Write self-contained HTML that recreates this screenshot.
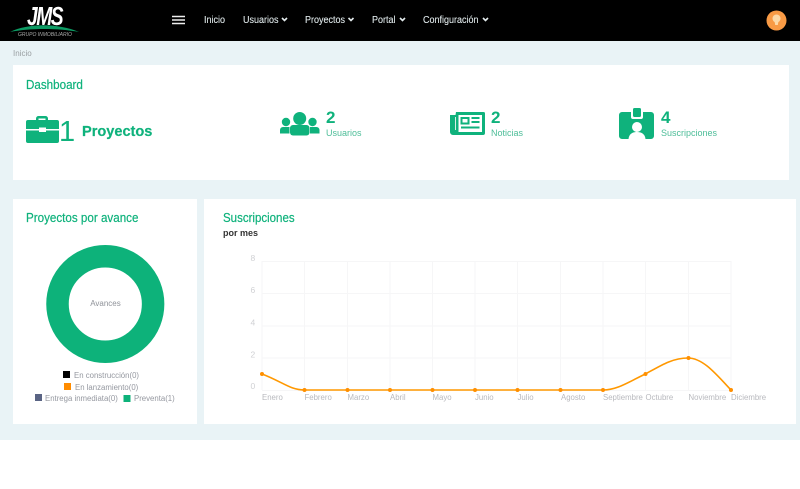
<!DOCTYPE html>
<html lang="es">
<head>
<meta charset="utf-8">
<title>Dashboard</title>
<style>
html,body{margin:0;padding:0;background:#fff}
body{width:800px;height:489px;overflow:hidden;position:relative;font-family:"Liberation Sans",sans-serif}
.a{position:absolute;white-space:nowrap;transform-origin:0 0}
.bg{left:0;top:41px;width:800px;height:399px;background:#e9f3f6}
.hd{left:0;top:0;width:800px;height:41px;background:#000}
.card{position:absolute;background:#fff}
.nav{top:15px;font-size:10px;line-height:12px;color:#dfe8ea;transform:scaleX(.9);-webkit-text-stroke:.1px #dfe8ea}
.g{color:#0fb27c;-webkit-text-stroke:.2px #0fb27c}
.sm{font-size:9px;line-height:12px;color:#4dbd98}
.num{font-size:17px;line-height:18px;font-weight:bold;color:#0fb27c}
svg{position:absolute;left:0;top:0}
</style>
</head>
<body>
<div class="a bg"></div>
<div class="a hd"></div>
<div class="card" style="left:13px;top:65px;width:776px;height:115px"></div>
<div class="card" style="left:13px;top:199px;width:184px;height:225px"></div>
<div class="card" style="left:204px;top:199px;width:592px;height:225px"></div>

<div class="a" style="left:27px;top:3px;font-size:26px;line-height:27px;font-weight:bold;font-style:italic;color:#fff;letter-spacing:-2px;transform:scaleX(.74)">JMS</div>
<div class="a" style="left:18px;top:32px;font-size:5px;line-height:7px;font-style:italic;color:#aaa">GRUPO INMOBILIARIO</div>

<div class="a nav" style="left:204px">Inicio</div>
<div class="a nav" style="left:243px">Usuarios</div>
<div class="a nav" style="left:305px">Proyectos</div>
<div class="a nav" style="left:372px">Portal</div>
<div class="a nav" style="left:423px">Configuración</div>

<div class="a" style="left:13px;top:48px;font-size:8px;line-height:11px;color:#9a9fa2">Inicio</div>

<div class="a g" style="left:26px;top:78px;font-size:12.5px;line-height:15px;transform:scaleX(.93)">Dashboard</div>
<div class="a" style="left:59px;top:116px;font-size:29px;line-height:33px;color:#0fb27c">1</div>
<div class="a g" style="left:82px;top:123px;font-size:15px;line-height:18px;font-weight:bold;transform:scaleX(.97)">Proyectos</div>

<div class="a num" style="left:326px;top:109px">2</div>
<div class="a sm" style="left:326px;top:127px">Usuarios</div>
<div class="a num" style="left:491px;top:109px">2</div>
<div class="a sm" style="left:491px;top:127px">Noticias</div>
<div class="a num" style="left:661px;top:109px">4</div>
<div class="a sm" style="left:661px;top:127px">Suscripciones</div>

<div class="a g" style="left:26px;top:211px;font-size:12.5px;line-height:15px;transform:scaleX(.93)">Proyectos por avance</div>
<div class="a g" style="left:223px;top:211px;font-size:12.5px;line-height:15px;transform:scaleX(.92)">Suscripciones</div>
<div class="a" style="left:223px;top:227px;font-size:9px;line-height:12px;font-weight:bold;color:#333">por mes</div>

<svg width="800" height="489" viewBox="0 0 800 489" xmlns="http://www.w3.org/2000/svg">
  <!-- logo arc -->
  <path d="M10 32C28 23 58 23 79 32C58 28 30 28 10 32Z" fill="#0c9a63"/>
  <!-- hamburger -->
  <path d="M172 16.500h13M172 20h13M172 23.500h13" stroke="#eee" stroke-width="1.600" fill="none"/>
  <!-- nav chevrons -->
  <g stroke="#e4ecee" stroke-width="1.600" fill="none">
    <path d="M282 18l2.500 2.500L287 18"/>
    <path d="M348.500 18l2.500 2.500L353.500 18"/>
    <path d="M400 18l2.500 2.500L405 18"/>
    <path d="M483 18l2.500 2.500L488 18"/>
  </g>
  <!-- avatar -->
  <circle cx="776.500" cy="20.500" r="10" fill="#f89a45"/>
  <circle cx="776.500" cy="18.500" r="4" fill="#fcd9a8"/>
  <path d="M774.500 21h4l-.7 4h-2.600z" fill="#fcd9a8"/>

  <!-- briefcase -->
  <g fill="#0fb27c">
    <path d="M36 120v-1.500a2.500 2.500 0 0 1 2.500-2.500h7a2.500 2.500 0 0 1 2.500 2.500v1.500h-2.500v-1.500h-7v1.500z"/>
    <path d="M28 120h29a2 2 0 0 1 2 2v7H46v-1.500h-7V129H26v-7a2 2 0 0 1 2-2z"/>
    <path d="M26 130.500h13v1.500h7v-1.500h13v10.500a2 2 0 0 1-2 2H28a2 2 0 0 1-2-2z"/>
  </g>
  <!-- users -->
  <g fill="#0fb27c">
    <circle cx="299.700" cy="118.500" r="6.500"/>
    <circle cx="286" cy="122" r="4.200"/>
    <circle cx="312.500" cy="122" r="4.200"/>
    <rect x="290" y="125" width="19.500" height="10.500" rx="3"/>
    <path d="M280 133.500v-3.500a3 3 0 0 1 3-3h6.500v6.500z"/>
    <path d="M319.500 133.500v-3.500a3 3 0 0 0-3-3H310v6.500z"/>
  </g>
  <!-- newspaper -->
  <g>
    <path d="M456 112h27.500a1.500 1.500 0 0 1 1.500 1.500V133a2 2 0 0 1-2 2h-30a3 3 0 0 1-3-3v-17h5.500z" fill="#0fb27c"/>
    <path d="M455.500 117v13" stroke="#d5f0e5" stroke-width="1"/>
    <rect x="458.500" y="115" width="23.500" height="17" fill="#fff"/>
    <rect x="461.500" y="118" width="7" height="5.500" fill="none" stroke="#0fb27c" stroke-width="2"/>
    <path d="M471.500 118h8M471.500 122h8M461 127.500h18.500" stroke="#0fb27c" stroke-width="2"/>
  </g>
  <!-- id badge -->
  <g fill="#0fb27c">
    <rect x="633" y="108" width="8" height="9" rx="1.500"/>
    <path d="M622 112h9v5a2 2 0 0 0 2 2h8a2 2 0 0 0 2-2v-5h8a3 3 0 0 1 3 3v21a3 3 0 0 1-3 3H622a3 3 0 0 1-3-3v-21a3 3 0 0 1 3-3z"/>
    <circle cx="637" cy="127" r="5" fill="#fff"/>
    <path d="M628.500 139c.5-5 4-7 8.500-7s8 2 8.500 7z" fill="#fff"/>
  </g>

  <!-- donut -->
  <circle cx="105.300" cy="304" r="47.800" fill="none" stroke="#0db27a" stroke-width="22.500"/>
  <text x="105.500" y="306" font-family="Liberation Sans" font-size="8" fill="#8f9299" text-anchor="middle">Avances</text>

  <!-- legend -->
  <g font-family="Liberation Sans" font-size="7.800" fill="#9598a0">
    <rect x="63" y="371" width="7" height="7" fill="#000"/>
    <text x="74" y="378">En construcción(0)</text>
    <rect x="64" y="383" width="7" height="7" fill="#ff8c00"/>
    <text x="75" y="390">En lanzamiento(0)</text>
    <rect x="35" y="394" width="7" height="7" fill="#5a6484"/>
    <text x="45" y="401">Entrega inmediata(0)</text>
    <rect x="123.500" y="395" width="7" height="7" fill="#0db27a"/>
    <text x="134" y="401">Preventa(1)</text>
  </g>

  <!-- grid -->
  <g stroke="#f6f6f7" stroke-width="1" fill="none">
    <path d="M262 261.500H731M262 293.500H731M262 326H731M262 358H731M262 390.500H731"/>
    <path d="M262 261V390M304.500 261V390M347.500 261V390M390 261V390M432.500 261V390M475 261V390M517.500 261V390M560.500 261V390M603 261V390M645.500 261V390M688.500 261V390M731 261V390"/>
  </g>
  <g font-family="Liberation Sans" font-size="8.500" fill="#d0d1d4">
    <text x="250.500" y="261">8</text>
    <text x="250.500" y="293">6</text>
    <text x="250.500" y="325.500">4</text>
    <text x="250.500" y="357.500">2</text>
    <text x="250.500" y="389">0</text>
  </g>
  <g font-family="Liberation Sans" font-size="7.800" fill="#b8b9be">
    <text x="262" y="400">Enero</text>
    <text x="304.500" y="400">Febrero</text>
    <text x="347.500" y="400">Marzo</text>
    <text x="390" y="400">Abril</text>
    <text x="432.500" y="400">Mayo</text>
    <text x="475" y="400">Junio</text>
    <text x="517.500" y="400">Julio</text>
    <text x="561" y="400">Agosto</text>
    <text x="603" y="400">Septiembre</text>
    <text x="645.500" y="400">Octubre</text>
    <text x="688.500" y="400">Noviembre</text>
    <text x="731" y="400">Diciembre</text>
  </g>
  <!-- line -->
  <path d="M262 374C283 382 290 390 304.500 390H603C618 390 630 381 645.500 374C660 366 672 358 688 358C703 358 716 374 731 390" fill="none" stroke="#ff9800" stroke-width="1.600"/>
  <g fill="#ff8f00">
    <circle cx="262" cy="374" r="2"/><circle cx="304.500" cy="390" r="2"/><circle cx="347.500" cy="390" r="2"/><circle cx="390" cy="390" r="2"/><circle cx="432.500" cy="390" r="2"/><circle cx="475" cy="390" r="2"/><circle cx="517.500" cy="390" r="2"/><circle cx="560.500" cy="390" r="2"/><circle cx="603" cy="390" r="2"/><circle cx="645.500" cy="374" r="2"/><circle cx="688.500" cy="358" r="2"/><circle cx="731" cy="390" r="2"/>
  </g>
</svg>
</body>
</html>
